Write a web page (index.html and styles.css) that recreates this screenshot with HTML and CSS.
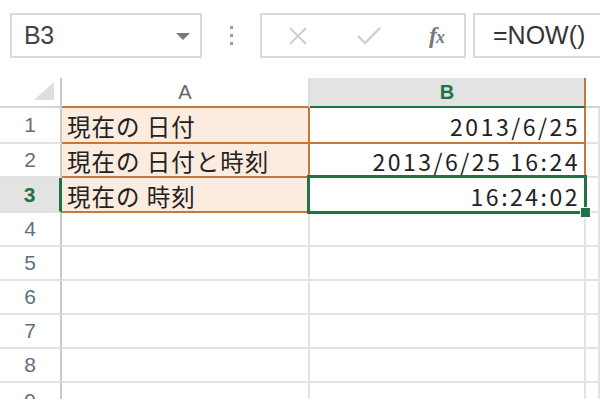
FILE: index.html
```html
<!DOCTYPE html>
<html lang="ja">
<head>
<meta charset="utf-8">
<link rel="stylesheet" href="styles.css">
</head>
<body>
<div class="toolbar">
  <div class="namebox">
    <span class="nb-text">B3</span>
    <svg class="nb-arrow" width="14" height="7" viewBox="0 0 14 7"><polygon points="0,0 14,0 7,7" fill="#7a7a7a"/></svg>
  </div>
  <div class="grip"><span></span><span></span><span></span></div>
  <div class="buttons">
    <svg class="btn" width="20" height="20" viewBox="0 0 20 20"><path d="M2 2 L18 18 M18 2 L2 18" stroke="#cfcfcf" stroke-width="2" fill="none"/></svg>
    <svg class="btn" width="26" height="20" viewBox="0 0 26 20"><path d="M2 10 L9 17 L24 2" stroke="#cfcfcf" stroke-width="2.4" fill="none"/></svg>
    <span class="fx">f<span class="fx-x">x</span></span>
  </div>
  <div class="formula">=NOW()</div>
</div>
<div class="sheet">
  <div class="corner"><svg width="20" height="18" viewBox="0 0 20 18"><polygon points="20,0 20,18 0,18" fill="#dedede"/></svg></div>
  <div class="colhead colhead-a">A</div>
  <div class="colhead colhead-sel">B</div>
  <div class="colhead colhead-c"></div>

  <div class="rowhead">1</div>
  <div class="cell cell-label">現在の 日付</div>
  <div class="cell cell-value">2013/6/25</div>
  <div class="cell"></div>

  <div class="rowhead">2</div>
  <div class="cell cell-label">現在の 日付と時刻</div>
  <div class="cell cell-value">2013/6/25 16:24</div>
  <div class="cell"></div>

  <div class="rowhead rowhead-sel">3</div>
  <div class="cell cell-label">現在の 時刻</div>
  <div class="cell cell-value cell-active">16:24:02<span class="selbox"><span class="handle"></span></span></div>
  <div class="cell"></div>

  <div class="rowhead">4</div><div class="cell"></div><div class="cell"></div><div class="cell"></div>
  <div class="rowhead">5</div><div class="cell"></div><div class="cell"></div><div class="cell"></div>
  <div class="rowhead">6</div><div class="cell"></div><div class="cell"></div><div class="cell"></div>
  <div class="rowhead">7</div><div class="cell"></div><div class="cell"></div><div class="cell"></div>
  <div class="rowhead">8</div><div class="cell"></div><div class="cell"></div><div class="cell"></div>
  <div class="rowhead rowhead-last">9</div><div class="cell"></div><div class="cell"></div><div class="cell"></div>
</div>
</body>
</html>
```
FILE: styles.css
```css
* { box-sizing: border-box; }
html, body { margin: 0; padding: 0; background: #fff; overflow: hidden; }
body { width: 600px; height: 399px; font-family: "Liberation Sans", Arial, sans-serif; }

.toolbar {
  height: 78px;
  display: flex;
  align-items: flex-start;
  padding: 13px 0 0 10px;
}
.namebox {
  width: 192px;
  height: 45px;
  border: 2px solid #dadada;
  display: flex;
  align-items: center;
  justify-content: space-between;
  padding: 0 10px 0 12px;
}
.nb-text { font-size: 25px; color: #444; letter-spacing: -0.5px; }
.nb-arrow { margin-top: 1px; }
.grip {
  width: 58px;
  height: 45px;
  display: flex;
  flex-direction: column;
  align-items: center;
  justify-content: center;
  gap: 5px;
}
.grip span { width: 3px; height: 3px; background: #9a9a9a; display: block; }
.buttons {
  width: 206px;
  height: 45px;
  border: 2px solid #dadada;
  display: flex;
  align-items: center;
  padding: 0 20px 0 26px;
  justify-content: space-between;
}
.fx {
  font-family: "Liberation Serif", "DejaVu Serif", serif;
  font-style: italic;
  font-weight: bold;
  font-size: 24px;
  color: #7a7a7a;
  letter-spacing: -1px;
}
.fx-x { font-size: 18px; }
.formula {
  flex: 1;
  margin-left: 7px;
  margin-right: -10px;
  height: 45px;
  border: 2px solid #dadada;
  padding-left: 18px;
  display: flex;
  align-items: center;
  font-size: 25px;
  color: #333;
}

.sheet {
  display: grid;
  grid-template-columns: 62px 248px 276px 1fr;
  grid-template-rows: 30px 36px 34px 35px 34px 34px 34px 34px 34px 34px;
}
.corner {
  border-right: 2px solid #c9c9c9;
  border-bottom: 2px solid #d4d4d4;
  display: flex;
  align-items: flex-end;
  justify-content: flex-end;
  padding: 0 6px 6px 0;
}
.colhead {
  display: flex;
  align-items: center;
  justify-content: center;
  font-size: 20px;
  color: #666;
  border-right: 2px solid #dcdcdc;
  border-bottom: 2px solid #d4d4d4;
}
.colhead-a { border-bottom-color: #c8773a; }
.colhead-sel {
  background: #e3e3e3;
  color: #217346;
  font-weight: bold;
  border-bottom: 2px solid #217346;
  border-right-color: #c8773a;
}
.colhead-c { border-right: none; }
.rowhead {
  display: flex;
  align-items: center;
  justify-content: center;
  font-size: 21px;
  color: #5f6f80;
  border-right: 2px solid #c9c9c9;
  border-bottom: 2px solid #e2e2e2;
}
.rowhead-last { align-items: flex-start; padding-top: 6px; }
.rowhead-sel {
  background: #e3e3e3;
  color: #217346;
  font-weight: bold;
  border-right: 3px solid #217346;
}
.cell {
  border-right: 2px solid #e2e2e2;
  border-bottom: 2px solid #e2e2e2;
  font-family: "Noto Sans CJK JP", sans-serif;
  font-size: 22px;
  color: #222;
  display: flex;
  align-items: center;
  white-space: nowrap;
  overflow: visible;
}
.cell-label {
  background: #fcebdf;
  border-right-color: #c8773a;
  border-bottom-color: #c8773a;
  padding-left: 5px;
  font-size: 23.5px;
  letter-spacing: 1px;
  padding-top: 2px;
}
.cell-value {
  border-right-color: #c8773a;
  border-bottom-color: #c8773a;
  justify-content: flex-end;
  padding-right: 4px;
  padding-top: 2px;
  font-family: "Noto Sans CJK JP", sans-serif;
  font-size: 23px;
  letter-spacing: 2.5px;
}
.cell-active { position: relative; }
.selbox {
  position: absolute;
  left: -3px;
  top: -3px;
  right: -3px;
  bottom: -3px;
  border: 3px solid #217346;
}
.handle {
  position: absolute;
  right: -6px;
  bottom: -6px;
  width: 9px;
  height: 9px;
  background: #217346;
  outline: 1px solid #fff;
}
```
